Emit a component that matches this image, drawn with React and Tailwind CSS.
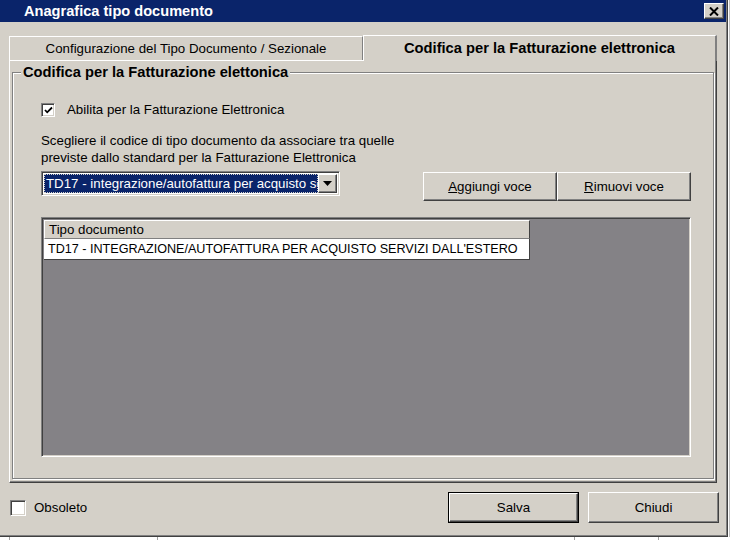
import React from "react";

const raised =
  "border-t border-l border-t-white border-l-white border-r border-b border-r-[#404040] border-b-[#404040] shadow-[inset_-1px_-1px_#808080]";
const sunken =
  "border-t border-l border-t-[#808080] border-l-[#808080] border-r border-b border-r-white border-b-white shadow-[inset_1px_1px_#404040,inset_-1px_-1px_#d4d0c8]";

function Check({ checked, size = "w-[14px] h-[14px]" }) {
  return (
    <div className={`${size} bg-white ${sunken} flex items-center justify-center shrink-0`}>
      {checked && (
        <svg width="9" height="9" viewBox="0 0 9 9">
          <path d="M1 4 L3.2 6.3 L8 1.5" fill="none" stroke="#000" strokeWidth="1.8" />
        </svg>
      )}
    </div>
  );
}

export default function App() {
  return (
    <div
      className="w-[732px] h-[540px] bg-white flex flex-col overflow-hidden text-black text-[13.3px] leading-none"
      style={{ fontFamily: '"Liberation Sans", Arial, sans-serif' }}
    >
      <div className="flex h-[537px]">
        <div className="w-[728px] h-[537px] bg-[#d4d0c8] flex flex-col border-r border-b border-[#404040] shadow-[inset_-1px_-1px_#808080]">
          {/* title bar */}
          <div className="h-[22px] bg-[#0a246a] flex items-center pl-[24px] pr-[2px] mr-[1px]">
            <span className="text-white font-bold text-[14.6px]">Anagrafica tipo documento</span>
            <div className={`ml-auto w-[20px] h-[16px] bg-[#d4d0c8] ${raised} flex items-center justify-center`}>
              <svg width="10" height="9" viewBox="0 0 10 9">
                <path d="M1 0.5 L9 8.5 M9 0.5 L1 8.5" stroke="#000" strokeWidth="2" />
              </svg>
            </div>
          </div>

          <div className="pl-[9px] pr-[10px] pt-[12px] flex flex-col">
            {/* tabs */}
            <div className="flex items-end h-[26px]">
              <div className="w-[354px] h-[24px] border-t border-l border-white border-r border-r-[#808080] flex items-center justify-center pt-[1px]">
                Configurazione del Tipo Documento / Sezionale
              </div>
              <div className="w-[354px] h-[26px] border-t border-l border-white border-r-2 border-r-[#808080] -mb-[1px] bg-[#d4d0c8] relative z-10 flex items-center justify-center font-bold text-[14.7px]">
                Codifica per la Fatturazione elettronica
              </div>
            </div>

            {/* panel */}
            <div className="h-[423px] border-t border-l border-white border-r border-b border-r-[#404040] border-b-[#404040] shadow-[inset_-1px_-1px_#808080] pt-[3px] pl-[2px] pr-[2px] pb-[3px] flex">
              <fieldset className="flex-1 border border-[#808080] shadow-[inset_1px_1px_#fff,1px_1px_#fff] flex flex-col">
                <legend className="ml-[8px] px-[2px] font-bold text-[14.7px] leading-[16px] bg-[#d4d0c8]">
                  Codifica per la Fatturazione elettonica
                </legend>

                <div className="pl-[28px] pr-[22px] flex flex-col">
                  <div className="flex items-center mt-[23px] h-[14px]">
                    <Check checked />
                    <span className="ml-[12px]">Abilita per la Fatturazione Elettronica</span>
                  </div>

                  <div className="mt-[15px] leading-[17px]">
                    Scegliere il codice di tipo documento da associare tra quelle
                    <br />
                    previste dallo standard per la Fatturazione Elettronica
                  </div>

                  <div className="flex items-start justify-between mt-[5px]">
                    <div className={`w-[299px] h-[25px] bg-white ${sunken} flex items-stretch p-[2px]`}>
                      <div className="flex-1 min-w-0 bg-[#0a246a] text-white overflow-hidden whitespace-nowrap flex items-center pl-[2px] outline-1 outline-dotted outline-[#d4d0c8] -outline-offset-1 text-[13.3px]">
                        TD17 - integrazione/autofattura per acquisto servizi dall'estero
                      </div>
                      <div className={`w-[19px] bg-[#d4d0c8] ${raised} flex items-center justify-center`}>
                        <svg width="9" height="5" viewBox="0 0 9 5">
                          <path d="M0 0 H9 L4.5 5 Z" fill="#000" />
                        </svg>
                      </div>
                    </div>
                    <div className="flex mt-[1px]">
                      <div className={`w-[134px] h-[29px] ${raised} flex items-center justify-center`}>
                        <span><span className="underline">A</span>ggiungi voce</span>
                      </div>
                      <div className={`w-[134px] h-[29px] ${raised} flex items-center justify-center`}>
                        <span><span className="underline">R</span>imuovi voce</span>
                      </div>
                    </div>
                  </div>

                  <div className={`mt-[16px] h-[240px] bg-[#848286] ${sunken} p-[2px] flex flex-col`}>
                    <div className="w-[486px] h-[19px] bg-[#d4d0c8] border-t border-l border-white border-r border-b border-r-[#404040] border-b-[#808080] flex items-center pl-[4px]">
                      Tipo documento
                    </div>
                    <div className="w-[486px] h-[21px] bg-white border-r border-b border-[#404040] flex items-center pl-[4px] whitespace-nowrap text-[12.6px]">
                      TD17 - INTEGRAZIONE/AUTOFATTURA PER ACQUISTO SERVIZI DALL'ESTERO
                    </div>
                  </div>
                </div>
              </fieldset>
            </div>
          </div>

          {/* bottom */}
          <div className="mt-[9px] h-[31px] flex items-center pl-[10px] pr-[8px]">
            <Check size="w-[16px] h-[16px]" />
            <span className="ml-[8px]">Obsoleto</span>
            <div className="ml-auto flex gap-[9px]">
              <div className="w-[131px] h-[31px] border border-black flex">
                <div className={`flex-1 ${raised} flex items-center justify-center`}>Salva</div>
              </div>
              <div className={`w-[131px] h-[31px] ${raised} flex items-center justify-center`}>Chiudi</div>
            </div>
          </div>
        </div>
        <div className="flex-1 border-l border-[#c0c0c0] ml-[1px]" />
      </div>
      <div className="flex-1 flex">
        <div className="w-[10px] border-r border-[#a0a0a0]" />
        <div className="w-[148px] border-r border-[#a0a0a0]" />
        <div className="w-[417px] border-r border-[#a0a0a0]" />
        <div className="w-[84px] border-r border-[#a0a0a0]" />
      </div>
    </div>
  );
}
